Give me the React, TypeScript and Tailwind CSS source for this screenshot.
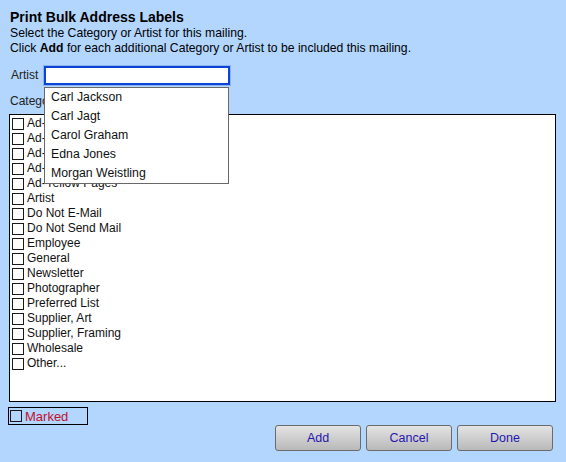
import React from "react";

const categories = [
  "Ad-Internet",
  "Ad-Magazine",
  "Ad-Newspaper",
  "Ad-Radio",
  "Ad-Yellow Pages",
  "Artist",
  "Do Not E-Mail",
  "Do Not Send Mail",
  "Employee",
  "General",
  "Newsletter",
  "Photographer",
  "Preferred List",
  "Supplier, Art",
  "Supplier, Framing",
  "Wholesale",
  "Other...",
];

const artists = ["Carl Jackson", "Carl Jagt", "Carol Graham", "Edna Jones", "Morgan Weistling"];

function Box() {
  return <span className="block w-[12px] h-[12px] border border-[#1a1a1a] shrink-0" />;
}

function Btn({ label, w }: { label: string; w: string }) {
  return (
    <button
      className={`${w} h-[26px] rounded-[3px] border border-[#6b6b6b] bg-gradient-to-b from-[#e4e4e4] to-[#b9b9b9] text-[12.5px] text-[#2616b0]`}
    >
      {label}
    </button>
  );
}

export default function App() {
  return (
    <div
      className="w-[566px] h-[462px] bg-[#b2d6fd] text-black overflow-hidden flex flex-col"
      style={{ fontFamily: '"Liberation Sans", Arial, sans-serif' }}
    >
      <div className="pt-[8px] pl-[10px]">
        <div className="text-[14px] font-bold leading-[18px]">Print Bulk Address Labels</div>
        <div className="text-[12.2px] leading-[15px]">Select the Category or Artist for this mailing.</div>
        <div className="text-[12.2px] leading-[15px]">
          Click <b>Add</b> for each additional Category or Artist to be included this mailing.
        </div>
      </div>

      <div className="flex items-center mt-[9px] h-[21px]">
        <span className="w-[44px] pl-[11px] text-[12px] leading-[15px] text-[#222]">Artist</span>
        <div className="relative w-[186px] h-[19px]">
          <div className="w-full h-full bg-white border-2 border-[#0b45d6] shadow-[0_0_0_1px_#8db2f3]" />
          <div className="absolute left-0 top-[21px] w-[185px] bg-white border border-[#686868] z-10">
            {artists.map((a) => (
              <div key={a} className="h-[19px] leading-[19px] pl-[6px] text-[12.3px] text-[#111]">
                {a}
              </div>
            ))}
          </div>
        </div>
      </div>

      <div className="mt-[8px] pl-[10px] text-[12px] leading-[15px] text-[#222]">Category</div>

      <div className="ml-[9px] mt-[5px] w-[547px] h-[288px] bg-white border border-black pt-[1px] pl-[1px]">
        {categories.map((c) => (
          <div key={c} className="flex items-center h-[15px] text-[12px] leading-[15px] text-[#111]">
            <span className="w-[1px]" />
            <Box />
            <span className="ml-[3px]">{c}</span>
          </div>
        ))}
      </div>

      <div className="flex items-start mt-[5px]">
        <div className="ml-[8px] w-[80px] h-[18px] border border-black flex items-center pl-[1px]">
          <Box />
          <span className="ml-[3px] text-[13px] leading-[15px] text-[#c2102c]">Marked</span>
        </div>
        <div className="ml-auto mr-[13px] mt-[18px] flex gap-[5px]">
          <Btn label="Add" w="w-[86px]" />
          <Btn label="Cancel" w="w-[86px]" />
          <Btn label="Done" w="w-[96px]" />
        </div>
      </div>
    </div>
  );
}
